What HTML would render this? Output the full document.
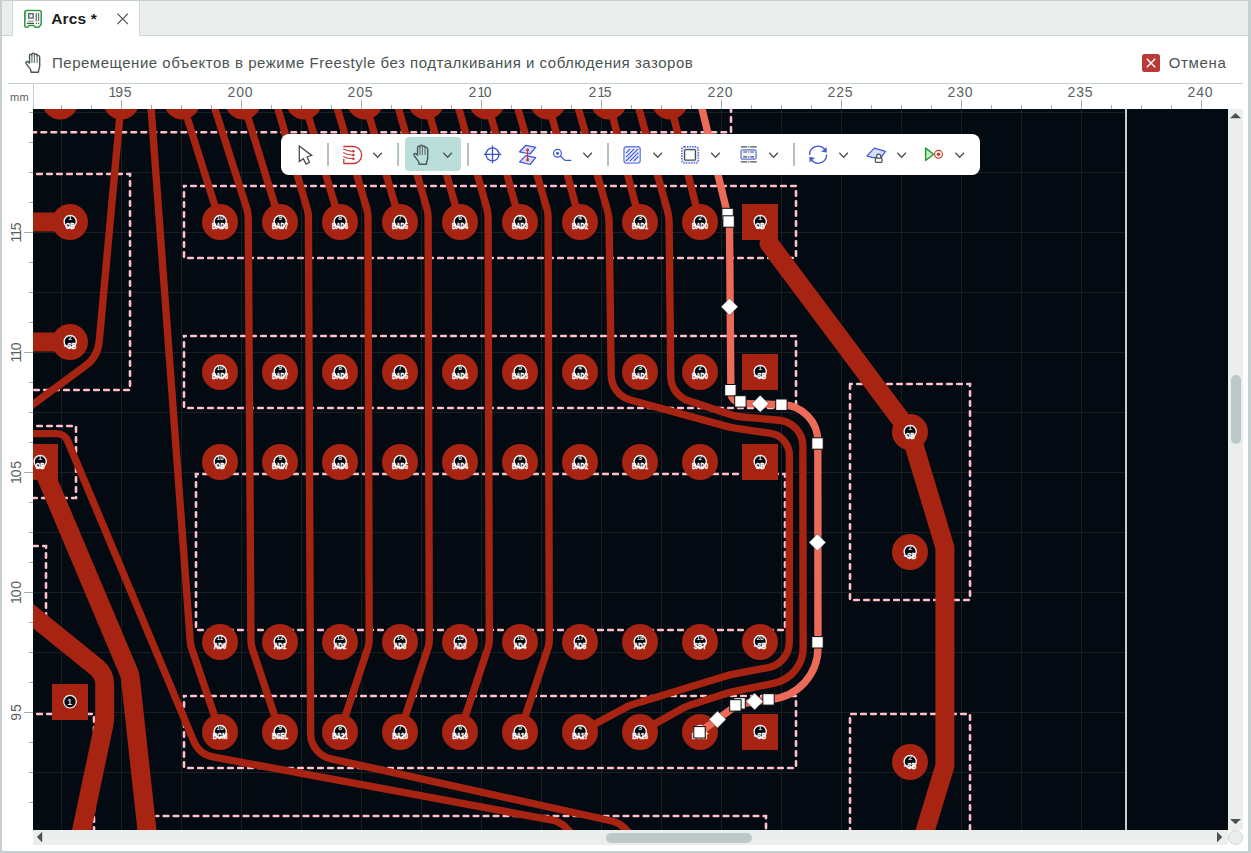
<!DOCTYPE html>
<html lang="ru">
<head>
<meta charset="utf-8">
<title>Arcs</title>
<style>
html,body{margin:0;padding:0;}
body{width:1251px;height:853px;position:relative;overflow:hidden;background:#fff;font-family:"Liberation Sans",sans-serif;color:#4b5352;}
.abs{position:absolute;}
#frameL{left:0;top:0;width:2px;height:853px;background:#c4d0d0;}
#frameT{left:0;top:0;width:1251px;height:1px;background:#c4d0d0;}
#frameR{left:1248px;top:0;width:3px;height:853px;background:#c4d0d0;}
#frameB{left:0;top:851px;width:1251px;height:2px;background:#c4d0d0;}
#tabbar{left:2px;top:1px;width:1246px;height:34px;background:#eceeed;border-bottom:1px solid #cbd5d4;}
#tab{left:12px;top:1px;width:126px;height:35px;background:#fff;border-left:1px solid #cfd8d7;border-right:1px solid #cfd8d7;}
#tabtitle{left:51.2px;top:10.4px;font-size:15.5px;font-weight:bold;color:#1c1c1c;line-height:18px;white-space:nowrap;letter-spacing:0.15px;}
#info{left:52px;top:53px;font-size:15px;line-height:20px;color:#4b5352;white-space:nowrap;letter-spacing:0.515px;}
#cancel{left:1168.7px;top:53px;font-size:15px;line-height:20px;color:#4b5352;white-space:nowrap;letter-spacing:0.65px;}
#cancelbox{left:1142px;top:54px;width:18px;height:18px;border-radius:2.5px;background:#b93a37;}
#rulerline{left:8px;top:83px;width:1235px;height:1px;background:#c3cfce;}
#rulervline{left:33px;top:84px;width:1px;height:25px;background:#c3cfce;}
#mm{left:10px;top:91px;font-size:11px;line-height:13px;color:#59615f;letter-spacing:0.4px;}
.rl{position:absolute;top:84.6px;font-size:14px;line-height:14px;color:#59615f;width:40px;text-align:center;letter-spacing:0.9px;}
.vl{position:absolute;left:-4px;font-size:14px;line-height:14px;color:#59615f;width:40px;height:14px;text-align:center;letter-spacing:0.9px;transform:rotate(-90deg);transform-origin:center center;}
.o{letter-spacing:-1.1px;}
#vscroll{left:1228px;top:109px;width:15px;height:721px;background:#eceeed;}
#hscroll{left:33px;top:830px;width:1195px;height:15px;background:#eceeed;}
#vthumb{left:1231px;top:375px;width:10px;height:69px;border-radius:5px;background:#bdc9c8;}
#hthumb{left:606px;top:833px;width:146px;height:10px;border-radius:5px;background:#bdc9c8;}
#corner{left:1228px;top:829.8px;width:13px;height:13px;border-radius:50%;background:#eceeed;border:1px solid #c9d8d6;box-sizing:content-box;}
#toolbar{left:281px;top:133.9px;width:698.8px;height:41.2px;border-radius:8px;background:#fff;}
#handbtn{left:404.6px;top:137.4px;width:56.7px;height:33.8px;border-radius:4px;background:#badfda;}
</style>
</head>
<body>
<div class="abs" id="tabbar"></div>
<div class="abs" id="tab"></div>
<div class="abs" id="frameT"></div>
<div class="abs" id="frameL"></div>
<div class="abs" id="frameR"></div>
<div class="abs" id="frameB"></div>

<!-- tab icon -->
<svg class="abs" style="left:0;top:0" width="60" height="36" viewBox="0 0 60 36">
 <path d="M26.8 10.6H39.2Q41.2 10.6 41.2 12.6V24.5L38.7 27.2H35.2L33.7 25.6H29L27.5 27.2H26.5Q24.8 27.2 24.8 25.3V12.6Q24.8 10.6 26.8 10.6Z" fill="#fff" stroke="#309a3b" stroke-width="1.5" stroke-linejoin="round"/>
 <path d="M25 13.5H26.3M25 15.9H26.3M25 18.3H26.3" stroke="#309a3b" stroke-width="1.1"/>
 <rect x="28.7" y="13.7" width="4.5" height="4.4" fill="#e9eded" stroke="#4b5352" stroke-width="1.2"/>
 <path d="M36.3 13.1V21.3" stroke="#707978" stroke-width="1.5"/>
 <path d="M38.7 13.1V21.3" stroke="#4b5352" stroke-width="1"/>
 <path d="M28.2 21.1H33.8" stroke="#8d9694" stroke-width="1.2"/>
 <path d="M26.9 23.4H34M35.7 23.4H36.8M38.2 23.4H39.2" stroke="#4b5352" stroke-width="1.2"/>
</svg>
<div class="abs" id="tabtitle">Arcs *</div>
<svg class="abs" style="left:116px;top:11.7px" width="14" height="14" viewBox="0 0 14 14"><path d="M1.4 1.6L12 12.2M12 1.6L1.4 12.2" stroke="#4b5352" stroke-width="1.2" fill="none"/></svg>

<!-- info bar -->
<svg class="abs" style="left:0;top:40px" width="60" height="44" viewBox="0 40 60 44"><g fill="none" stroke="#4b5658" stroke-linecap="round" stroke-linejoin="round"><path d="M29.55 63.1V55.6C29.55 54.6 30.3 54.3 30.9 54.3C31.5 54.3 31.9 54.6 31.9 55.2V54.6C31.9 53.6 32.5 53.1 33.3 53.1C34.1 53.1 34.5 53.6 34.5 54.6V54.9C34.5 54.3 35.2 54 35.8 54C36.5 54 37.1 54.4 37.1 55.2V55.7C37.2 55.2 37.8 55.2 38.4 55.4C39.2 55.7 39.7 56.2 39.7 57.2V66C39.7 67.6 39 68.8 38.6 69.8V71.4Q38.6 72.2 37.8 72.2H31.6Q30.8 72.2 30.8 71.4V69.9L26.2 63.7C25.6 62.9 25.7 62.1 26.3 61.6C26.9 61.2 27.6 61.4 28.1 61.9L29.55 63.1" stroke-width="1.4"/><path d="M31.9 55.4V62.4M34.4 54.8V62.4M37.1 55.6V62.4" stroke="#6f7a7b" stroke-width="1.25"/></g></svg>
<div class="abs" id="info">Перемещение объектов в режиме Freestyle без подталкивания и соблюдения зазоров</div>
<div class="abs" id="cancelbox"></div>
<svg class="abs" style="left:1142px;top:54px" width="18" height="18" viewBox="0 0 18 18"><path d="M4.8 4.8L13.2 13.2M13.2 4.8L4.8 13.2" stroke="#fff" stroke-width="1.4" fill="none"/></svg>
<div class="abs" id="cancel">Отмена</div>

<!-- rulers -->
<div class="abs" id="rulerline"></div>
<div class="abs" id="rulervline"></div>
<div class="abs" id="mm">mm</div>
<svg class="abs" style="left:0;top:0" width="1251" height="853" viewBox="0 0 1251 853"><g fill="#9fb1af" shape-rendering="crispEdges"><rect x="61.0" y="105" width="1" height="4"/><rect x="91.0" y="105" width="1" height="4"/><rect x="121.0" y="100" width="1" height="9"/><rect x="151.0" y="105" width="1" height="4"/><rect x="181.0" y="105" width="1" height="4"/><rect x="211.0" y="105" width="1" height="4"/><rect x="241.0" y="100" width="1" height="9"/><rect x="271.0" y="105" width="1" height="4"/><rect x="301.0" y="105" width="1" height="4"/><rect x="331.0" y="105" width="1" height="4"/><rect x="361.0" y="100" width="1" height="9"/><rect x="391.0" y="105" width="1" height="4"/><rect x="421.0" y="105" width="1" height="4"/><rect x="451.0" y="105" width="1" height="4"/><rect x="481.0" y="100" width="1" height="9"/><rect x="511.0" y="105" width="1" height="4"/><rect x="541.0" y="105" width="1" height="4"/><rect x="571.0" y="105" width="1" height="4"/><rect x="601.0" y="100" width="1" height="9"/><rect x="631.0" y="105" width="1" height="4"/><rect x="661.0" y="105" width="1" height="4"/><rect x="691.0" y="105" width="1" height="4"/><rect x="721.0" y="100" width="1" height="9"/><rect x="751.0" y="105" width="1" height="4"/><rect x="781.0" y="105" width="1" height="4"/><rect x="811.0" y="105" width="1" height="4"/><rect x="841.0" y="100" width="1" height="9"/><rect x="871.0" y="105" width="1" height="4"/><rect x="901.0" y="105" width="1" height="4"/><rect x="931.0" y="105" width="1" height="4"/><rect x="961.0" y="100" width="1" height="9"/><rect x="991.0" y="105" width="1" height="4"/><rect x="1021.0" y="105" width="1" height="4"/><rect x="1051.0" y="105" width="1" height="4"/><rect x="1081.0" y="100" width="1" height="9"/><rect x="1111.0" y="105" width="1" height="4"/><rect x="1141.0" y="105" width="1" height="4"/><rect x="1171.0" y="105" width="1" height="4"/><rect x="1201.0" y="100" width="1" height="9"/><rect x="29" y="112.0" width="4" height="1"/><rect x="29" y="142.0" width="4" height="1"/><rect x="29" y="172.0" width="4" height="1"/><rect x="29" y="202.0" width="4" height="1"/><rect x="24" y="232.0" width="9" height="1"/><rect x="29" y="262.0" width="4" height="1"/><rect x="29" y="292.0" width="4" height="1"/><rect x="29" y="322.0" width="4" height="1"/><rect x="24" y="352.0" width="9" height="1"/><rect x="29" y="382.0" width="4" height="1"/><rect x="29" y="412.0" width="4" height="1"/><rect x="29" y="442.0" width="4" height="1"/><rect x="24" y="472.0" width="9" height="1"/><rect x="29" y="502.0" width="4" height="1"/><rect x="29" y="532.0" width="4" height="1"/><rect x="29" y="562.0" width="4" height="1"/><rect x="24" y="592.0" width="9" height="1"/><rect x="29" y="622.0" width="4" height="1"/><rect x="29" y="652.0" width="4" height="1"/><rect x="29" y="682.0" width="4" height="1"/><rect x="24" y="712.0" width="9" height="1"/><rect x="29" y="742.0" width="4" height="1"/><rect x="29" y="772.0" width="4" height="1"/><rect x="29" y="802.0" width="4" height="1"/></g></svg>
<div class="rl" style="left:100.5px"><span class=o>1</span>95</div>
<div class="rl" style="left:220.5px">200</div>
<div class="rl" style="left:340.5px">205</div>
<div class="rl" style="left:460.5px">2<span class=o>1</span>0</div>
<div class="rl" style="left:580.5px">2<span class=o>1</span>5</div>
<div class="rl" style="left:700.5px">220</div>
<div class="rl" style="left:820.5px">225</div>
<div class="rl" style="left:940.5px">230</div>
<div class="rl" style="left:1060.5px">235</div>
<div class="rl" style="left:1180.5px">240</div>
<div class="vl" style="top:224.5px"><span class=o>1</span><span class=o>1</span>5</div>
<div class="vl" style="top:344.5px"><span class=o>1</span><span class=o>1</span>0</div>
<div class="vl" style="top:464.5px"><span class=o>1</span>05</div>
<div class="vl" style="top:584.5px"><span class=o>1</span>00</div>
<div class="vl" style="top:704.5px">95</div>

<!-- canvas -->
<svg class="abs" style="left:33px;top:109px" width="1195" height="721" viewBox="33 109 1195 721">
<rect x="33" y="109" width="1195" height="721" fill="#030a11"/>
<g stroke="#171f21" stroke-width="1" fill="none" shape-rendering="crispEdges"><path d="M61.5 109V830"/><path d="M121.5 109V830"/><path d="M181.5 109V830"/><path d="M241.5 109V830"/><path d="M301.5 109V830"/><path d="M361.5 109V830"/><path d="M421.5 109V830"/><path d="M481.5 109V830"/><path d="M541.5 109V830"/><path d="M601.5 109V830"/><path d="M661.5 109V830"/><path d="M721.5 109V830"/><path d="M781.5 109V830"/><path d="M841.5 109V830"/><path d="M901.5 109V830"/><path d="M961.5 109V830"/><path d="M1021.5 109V830"/><path d="M1081.5 109V830"/><path d="M33 112.5H1126"/><path d="M33 172.5H1126"/><path d="M33 232.5H1126"/><path d="M33 292.5H1126"/><path d="M33 352.5H1126"/><path d="M33 412.5H1126"/><path d="M33 472.5H1126"/><path d="M33 532.5H1126"/><path d="M33 592.5H1126"/><path d="M33 652.5H1126"/><path d="M33 712.5H1126"/><path d="M33 772.5H1126"/></g><rect x="1125" y="109" width="2" height="721" fill="#c9cccc"/><g fill="none" stroke="#ffc0cb" stroke-width="2.6" stroke-dasharray="4.6 5.4" stroke-dashoffset="2.8" stroke-linecap="round"><path d="M731 90V132.3H20"/><path d="M20 174H130V390H20"/><path d="M184 186H796V258H184Z"/><path d="M184 336H796V408H184Z"/><path d="M196 474H785V630H196Z"/><path d="M184 696H796V768H184Z"/><path d="M20 426H76V498H20"/><path d="M16 546H46V621"/><path d="M20 714H94V860"/><path d="M156.5 816H766V860"/><path d="M850 384H970V600H850Z"/><path d="M850 860V714H970V860"/></g><g fill="none" stroke="#a72312" stroke-linecap="round" stroke-linejoin="round"><g stroke-width="19"><path d="M769 243.4L910 432"/><path d="M910.00 432.00L944.90 547.50L944.90 765.70L916.30 860.00"/><path d="M20 222H70"/><path d="M20 342H70"/><path d="M40.00 462.00L128.29 670.95A30.00 30.00 0 0 1 130.48 679.37L150.20 860.00"/><path d="M20.00 605.40L96.55 667.40A22.00 22.00 0 0 1 104.70 684.49L104.70 717.87A30.00 30.00 0 0 1 104.05 724.06L75.40 860.00"/></g><g stroke-width="7.4"><path d="M121.20 101.60L99.24 341.04A35.00 35.00 0 0 1 85.14 366.03L20.00 414.00"/><path d="M150.50 100.00L190.27 641.82A25.00 25.00 0 0 0 191.52 648.02L220.00 732.00"/><path d="M182.1 101.6L220 222"/><path d="M243.1 101.6L280 222"/><path d="M304.0 101.6L340 222"/><path d="M365.0 101.6L400 222"/><path d="M426.0 101.6L460 222"/><path d="M486.9 101.6L520 222"/><path d="M547.9 101.6L580 222"/><path d="M608.8 101.6L640 222"/><path d="M669.8 101.6L700 222"/><path d="M211.49 98.00L246.81 208.64A30.00 30.00 0 0 1 248.23 217.57L250.97 641.03A25.00 25.00 0 0 0 252.26 648.77L280.00 732.00"/><path d="M274.78 98.00L307.21 208.94A30.00 30.00 0 0 1 308.42 217.23L310.61 733.52A26.00 26.00 0 0 0 330.99 758.79L611.81 821.01A25.00 25.00 0 0 1 624.18 827.83L656.00 860.00"/><path d="M334.27 98.00L366.80 208.91A30.00 30.00 0 0 1 368.01 217.27L369.19 639.92A25.00 25.00 0 0 1 367.92 647.87L340.00 732.00"/><path d="M395.59 98.00L426.98 209.04A30.00 30.00 0 0 1 428.11 217.12L429.29 639.91A25.00 25.00 0 0 1 428.01 647.88L400.00 732.00"/><path d="M455.92 98.00L487.00 209.08A30.00 30.00 0 0 1 488.11 217.08L489.29 639.91A25.00 25.00 0 0 1 488.01 647.88L460.00 732.00"/><path d="M514.82 98.00L546.93 208.95A30.00 30.00 0 0 1 548.11 217.21L549.29 639.91A25.00 25.00 0 0 1 548.01 647.88L520.00 732.00"/><path d="M575.36 98.00L607.36 210.26A45.00 45.00 0 0 1 609.08 221.97L611.23 375.25A26.00 26.00 0 0 0 630.36 399.96L728.70 426.87A40.00 40.00 0 0 0 733.36 427.85L770.63 433.40A22.00 22.00 0 0 1 789.39 455.17L789.31 642.00A26.00 26.00 0 0 1 768.18 667.53L732.18 674.39A60.00 60.00 0 0 0 725.91 675.94L632.53 704.44A30.00 30.00 0 0 0 627.09 706.70L580.00 732.00"/><path d="M635.92 98.00L667.40 210.29A45.00 45.00 0 0 1 669.07 221.93L670.79 376.44A26.00 26.00 0 0 0 688.63 400.83L731.00 414.85A40.00 40.00 0 0 0 740.01 416.71L779.14 420.19A26.00 26.00 0 0 1 802.84 446.05L803.15 647.73A36.00 36.00 0 0 1 774.56 683.02L732.08 691.95A60.00 60.00 0 0 0 726.01 693.56L688.98 705.50A30.00 30.00 0 0 0 683.65 707.82L640.00 732.00"/><path d="M20.00 433.60L56.62 433.60A12.00 12.00 0 0 1 67.69 440.95L193.83 741.38A26.00 26.00 0 0 0 213.02 756.87L552.16 820.23A25.00 25.00 0 0 1 565.54 827.44L597.00 860.00"/></g></g><g fill="#a72312"><circle cx="60.2" cy="101.6" r="18"/><circle cx="121.2" cy="101.6" r="18"/><circle cx="182.1" cy="101.6" r="18"/><circle cx="243.1" cy="101.6" r="18"/><circle cx="304.0" cy="101.6" r="18"/><circle cx="365.0" cy="101.6" r="18"/><circle cx="426.0" cy="101.6" r="18"/><circle cx="486.9" cy="101.6" r="18"/><circle cx="547.9" cy="101.6" r="18"/><circle cx="608.8" cy="101.6" r="18"/><circle cx="669.8" cy="101.6" r="18"/><circle cx="220" cy="222" r="18"/><circle cx="280" cy="222" r="18"/><circle cx="340" cy="222" r="18"/><circle cx="400" cy="222" r="18"/><circle cx="460" cy="222" r="18"/><circle cx="520" cy="222" r="18"/><circle cx="580" cy="222" r="18"/><circle cx="640" cy="222" r="18"/><circle cx="700" cy="222" r="18"/><rect x="742" y="204" width="36" height="36"/><circle cx="220" cy="372" r="18"/><circle cx="280" cy="372" r="18"/><circle cx="340" cy="372" r="18"/><circle cx="400" cy="372" r="18"/><circle cx="460" cy="372" r="18"/><circle cx="520" cy="372" r="18"/><circle cx="580" cy="372" r="18"/><circle cx="640" cy="372" r="18"/><circle cx="700" cy="372" r="18"/><rect x="742" y="354" width="36" height="36"/><circle cx="220" cy="462" r="18"/><circle cx="280" cy="462" r="18"/><circle cx="340" cy="462" r="18"/><circle cx="400" cy="462" r="18"/><circle cx="460" cy="462" r="18"/><circle cx="520" cy="462" r="18"/><circle cx="580" cy="462" r="18"/><circle cx="640" cy="462" r="18"/><circle cx="700" cy="462" r="18"/><rect x="742" y="444" width="36" height="36"/><circle cx="220" cy="642" r="18"/><circle cx="280" cy="642" r="18"/><circle cx="340" cy="642" r="18"/><circle cx="400" cy="642" r="18"/><circle cx="460" cy="642" r="18"/><circle cx="520" cy="642" r="18"/><circle cx="580" cy="642" r="18"/><circle cx="640" cy="642" r="18"/><circle cx="700" cy="642" r="18"/><circle cx="760" cy="642" r="18"/><circle cx="220" cy="732" r="18"/><circle cx="280" cy="732" r="18"/><circle cx="340" cy="732" r="18"/><circle cx="400" cy="732" r="18"/><circle cx="460" cy="732" r="18"/><circle cx="520" cy="732" r="18"/><circle cx="580" cy="732" r="18"/><circle cx="640" cy="732" r="18"/><circle cx="700" cy="732" r="18"/><rect x="742" y="714" width="36" height="36"/><circle cx="70" cy="222" r="18"/><circle cx="70" cy="342" r="18"/><rect x="22" y="444" width="36" height="36"/><rect x="52" y="684" width="36" height="36"/><circle cx="910" cy="432" r="18"/><circle cx="910" cy="552" r="18"/><circle cx="910" cy="762" r="18"/></g><g fill="#fff" stroke="#fff" stroke-width="0.2" stroke-linejoin="round" font-family="&quot;Liberation Sans&quot;, sans-serif" font-size="7.6"><circle cx="220.2" cy="221.5" r="6.1" fill="#05090d" stroke="#fff" stroke-width="1.3"/><text transform="translate(216.82 219.90) scale(0.8 1)">10</text><circle cx="220.2" cy="371.5" r="6.1" fill="#05090d" stroke="#fff" stroke-width="1.3"/><text transform="translate(216.82 369.90) scale(0.8 1)">10</text><circle cx="220.2" cy="461.5" r="6.1" fill="#05090d" stroke="#fff" stroke-width="1.3"/><text transform="translate(216.82 459.90) scale(0.8 1)">10</text><circle cx="280.2" cy="221.5" r="6.1" fill="#05090d" stroke="#fff" stroke-width="1.3"/><text transform="translate(278.51 219.90) scale(0.8 1)">9</text><circle cx="280.2" cy="371.5" r="6.1" fill="#05090d" stroke="#fff" stroke-width="1.3"/><text transform="translate(278.51 369.90) scale(0.8 1)">9</text><circle cx="280.2" cy="461.5" r="6.1" fill="#05090d" stroke="#fff" stroke-width="1.3"/><text transform="translate(278.51 459.90) scale(0.8 1)">9</text><circle cx="340.2" cy="221.5" r="6.1" fill="#05090d" stroke="#fff" stroke-width="1.3"/><text transform="translate(338.51 219.90) scale(0.8 1)">8</text><circle cx="340.2" cy="371.5" r="6.1" fill="#05090d" stroke="#fff" stroke-width="1.3"/><text transform="translate(338.51 369.90) scale(0.8 1)">8</text><circle cx="340.2" cy="461.5" r="6.1" fill="#05090d" stroke="#fff" stroke-width="1.3"/><text transform="translate(338.51 459.90) scale(0.8 1)">8</text><circle cx="400.2" cy="221.5" r="6.1" fill="#05090d" stroke="#fff" stroke-width="1.3"/><text transform="translate(398.51 219.90) scale(0.8 1)">7</text><circle cx="400.2" cy="371.5" r="6.1" fill="#05090d" stroke="#fff" stroke-width="1.3"/><text transform="translate(398.51 369.90) scale(0.8 1)">7</text><circle cx="400.2" cy="461.5" r="6.1" fill="#05090d" stroke="#fff" stroke-width="1.3"/><text transform="translate(398.51 459.90) scale(0.8 1)">7</text><circle cx="460.2" cy="221.5" r="6.1" fill="#05090d" stroke="#fff" stroke-width="1.3"/><text transform="translate(458.51 219.90) scale(0.8 1)">6</text><circle cx="460.2" cy="371.5" r="6.1" fill="#05090d" stroke="#fff" stroke-width="1.3"/><text transform="translate(458.51 369.90) scale(0.8 1)">6</text><circle cx="460.2" cy="461.5" r="6.1" fill="#05090d" stroke="#fff" stroke-width="1.3"/><text transform="translate(458.51 459.90) scale(0.8 1)">6</text><circle cx="520.2" cy="221.5" r="6.1" fill="#05090d" stroke="#fff" stroke-width="1.3"/><text transform="translate(518.51 219.90) scale(0.8 1)">5</text><circle cx="520.2" cy="371.5" r="6.1" fill="#05090d" stroke="#fff" stroke-width="1.3"/><text transform="translate(518.51 369.90) scale(0.8 1)">5</text><circle cx="520.2" cy="461.5" r="6.1" fill="#05090d" stroke="#fff" stroke-width="1.3"/><text transform="translate(518.51 459.90) scale(0.8 1)">5</text><circle cx="580.2" cy="221.5" r="6.1" fill="#05090d" stroke="#fff" stroke-width="1.3"/><text transform="translate(578.51 219.90) scale(0.8 1)">4</text><circle cx="580.2" cy="371.5" r="6.1" fill="#05090d" stroke="#fff" stroke-width="1.3"/><text transform="translate(578.51 369.90) scale(0.8 1)">4</text><circle cx="580.2" cy="461.5" r="6.1" fill="#05090d" stroke="#fff" stroke-width="1.3"/><text transform="translate(578.51 459.90) scale(0.8 1)">4</text><circle cx="640.2" cy="221.5" r="6.1" fill="#05090d" stroke="#fff" stroke-width="1.3"/><text transform="translate(638.51 219.90) scale(0.8 1)">3</text><circle cx="640.2" cy="371.5" r="6.1" fill="#05090d" stroke="#fff" stroke-width="1.3"/><text transform="translate(638.51 369.90) scale(0.8 1)">3</text><circle cx="640.2" cy="461.5" r="6.1" fill="#05090d" stroke="#fff" stroke-width="1.3"/><text transform="translate(638.51 459.90) scale(0.8 1)">3</text><circle cx="700.2" cy="221.5" r="6.1" fill="#05090d" stroke="#fff" stroke-width="1.3"/><text transform="translate(698.51 219.90) scale(0.8 1)">2</text><circle cx="700.2" cy="371.5" r="6.1" fill="#05090d" stroke="#fff" stroke-width="1.3"/><text transform="translate(698.51 369.90) scale(0.8 1)">2</text><circle cx="700.2" cy="461.5" r="6.1" fill="#05090d" stroke="#fff" stroke-width="1.3"/><text transform="translate(698.51 459.90) scale(0.8 1)">2</text><circle cx="760.2" cy="221.5" r="6.1" fill="#05090d" stroke="#fff" stroke-width="1.3"/><text transform="translate(758.51 219.90) scale(0.8 1)">1</text><circle cx="760.2" cy="371.5" r="6.1" fill="#05090d" stroke="#fff" stroke-width="1.3"/><text transform="translate(758.51 369.90) scale(0.8 1)">1</text><circle cx="760.2" cy="461.5" r="6.1" fill="#05090d" stroke="#fff" stroke-width="1.3"/><text transform="translate(758.51 459.90) scale(0.8 1)">1</text><circle cx="220.2" cy="641.5" r="6.1" fill="#05090d" stroke="#fff" stroke-width="1.3"/><text transform="translate(216.82 639.90) scale(0.8 1)">11</text><circle cx="280.2" cy="641.5" r="6.1" fill="#05090d" stroke="#fff" stroke-width="1.3"/><text transform="translate(276.82 639.90) scale(0.8 1)">12</text><circle cx="340.2" cy="641.5" r="6.1" fill="#05090d" stroke="#fff" stroke-width="1.3"/><text transform="translate(336.82 639.90) scale(0.8 1)">13</text><circle cx="400.2" cy="641.5" r="6.1" fill="#05090d" stroke="#fff" stroke-width="1.3"/><text transform="translate(396.82 639.90) scale(0.8 1)">14</text><circle cx="460.2" cy="641.5" r="6.1" fill="#05090d" stroke="#fff" stroke-width="1.3"/><text transform="translate(456.82 639.90) scale(0.8 1)">15</text><circle cx="520.2" cy="641.5" r="6.1" fill="#05090d" stroke="#fff" stroke-width="1.3"/><text transform="translate(516.82 639.90) scale(0.8 1)">16</text><circle cx="580.2" cy="641.5" r="6.1" fill="#05090d" stroke="#fff" stroke-width="1.3"/><text transform="translate(576.82 639.90) scale(0.8 1)">17</text><circle cx="640.2" cy="641.5" r="6.1" fill="#05090d" stroke="#fff" stroke-width="1.3"/><text transform="translate(636.82 639.90) scale(0.8 1)">18</text><circle cx="700.2" cy="641.5" r="6.1" fill="#05090d" stroke="#fff" stroke-width="1.3"/><text transform="translate(696.82 639.90) scale(0.8 1)">19</text><circle cx="760.2" cy="641.5" r="6.1" fill="#05090d" stroke="#fff" stroke-width="1.3"/><text transform="translate(756.82 639.90) scale(0.8 1)">20</text><circle cx="220.2" cy="731.5" r="6.1" fill="#05090d" stroke="#fff" stroke-width="1.3"/><text transform="translate(216.82 729.90) scale(0.8 1)">10</text><circle cx="280.2" cy="731.5" r="6.1" fill="#05090d" stroke="#fff" stroke-width="1.3"/><text transform="translate(278.51 729.90) scale(0.8 1)">9</text><circle cx="340.2" cy="731.5" r="6.1" fill="#05090d" stroke="#fff" stroke-width="1.3"/><text transform="translate(338.51 729.90) scale(0.8 1)">8</text><circle cx="400.2" cy="731.5" r="6.1" fill="#05090d" stroke="#fff" stroke-width="1.3"/><text transform="translate(398.51 729.90) scale(0.8 1)">7</text><circle cx="460.2" cy="731.5" r="6.1" fill="#05090d" stroke="#fff" stroke-width="1.3"/><text transform="translate(458.51 729.90) scale(0.8 1)">6</text><circle cx="520.2" cy="731.5" r="6.1" fill="#05090d" stroke="#fff" stroke-width="1.3"/><text transform="translate(518.51 729.90) scale(0.8 1)">5</text><circle cx="580.2" cy="731.5" r="6.1" fill="#05090d" stroke="#fff" stroke-width="1.3"/><text transform="translate(578.51 729.90) scale(0.8 1)">4</text><circle cx="640.2" cy="731.5" r="6.1" fill="#05090d" stroke="#fff" stroke-width="1.3"/><text transform="translate(638.51 729.90) scale(0.8 1)">3</text><circle cx="700.2" cy="731.5" r="6.1" fill="#05090d" stroke="#fff" stroke-width="1.3"/><text transform="translate(698.51 729.90) scale(0.8 1)">2</text><circle cx="760.2" cy="731.5" r="6.1" fill="#05090d" stroke="#fff" stroke-width="1.3"/><text transform="translate(758.51 729.90) scale(0.8 1)">1</text><circle cx="70.2" cy="221.5" r="6.1" fill="#05090d" stroke="#fff" stroke-width="1.3"/><text transform="translate(68.51 219.90) scale(0.8 1)">1</text><circle cx="70.2" cy="341.5" r="6.1" fill="#05090d" stroke="#fff" stroke-width="1.3"/><text transform="translate(68.51 339.90) scale(0.8 1)">2</text><circle cx="40.2" cy="461.5" r="6.1" fill="#05090d" stroke="#fff" stroke-width="1.3"/><text transform="translate(38.51 459.90) scale(0.8 1)">1</text><circle cx="910.2" cy="431.5" r="6.1" fill="#05090d" stroke="#fff" stroke-width="1.3"/><text transform="translate(908.51 429.90) scale(0.8 1)">1</text><circle cx="910.2" cy="551.5" r="6.1" fill="#05090d" stroke="#fff" stroke-width="1.3"/><text transform="translate(908.51 549.90) scale(0.8 1)">2</text><circle cx="910.2" cy="761.5" r="6.1" fill="#05090d" stroke="#fff" stroke-width="1.3"/><text transform="translate(908.51 759.90) scale(0.8 1)">2</text><g stroke-width="0.32" font-weight="bold" font-size="8.19"><text transform="translate(212.10 229.10) scale(0.7175 1)">BAD8</text><text transform="translate(212.10 379.10) scale(0.7175 1)">BAD8</text><text transform="translate(215.43 469.10) scale(0.76 1)">OB</text><text transform="translate(272.10 229.10) scale(0.7175 1)">BAD7</text><text transform="translate(272.10 379.10) scale(0.7175 1)">BAD7</text><text transform="translate(272.10 469.10) scale(0.7175 1)">BAD7</text><text transform="translate(332.10 229.10) scale(0.7175 1)">BAD6</text><text transform="translate(332.10 379.10) scale(0.7175 1)">BAD6</text><text transform="translate(332.10 469.10) scale(0.7175 1)">BAD6</text><text transform="translate(392.10 229.10) scale(0.7175 1)">BAD5</text><text transform="translate(392.10 379.10) scale(0.7175 1)">BAD5</text><text transform="translate(392.10 469.10) scale(0.7175 1)">BAD5</text><text transform="translate(452.10 229.10) scale(0.7175 1)">BAD4</text><text transform="translate(452.10 379.10) scale(0.7175 1)">BAD4</text><text transform="translate(452.10 469.10) scale(0.7175 1)">BAD4</text><text transform="translate(512.10 229.10) scale(0.7175 1)">BAD3</text><text transform="translate(512.10 379.10) scale(0.7175 1)">BAD3</text><text transform="translate(512.10 469.10) scale(0.7175 1)">BAD3</text><text transform="translate(572.10 229.10) scale(0.7175 1)">BAD2</text><text transform="translate(572.10 379.10) scale(0.7175 1)">BAD2</text><text transform="translate(572.10 469.10) scale(0.7175 1)">BAD2</text><text transform="translate(632.10 229.10) scale(0.7175 1)">BAD1</text><text transform="translate(632.10 379.10) scale(0.7175 1)">BAD1</text><text transform="translate(632.10 469.10) scale(0.7175 1)">BAD1</text><text transform="translate(692.10 229.10) scale(0.7175 1)">BAD0</text><text transform="translate(692.10 379.10) scale(0.7175 1)">BAD0</text><text transform="translate(692.10 469.10) scale(0.7175 1)">BAD0</text><text transform="translate(755.43 229.10) scale(0.76 1)">OB</text><text transform="translate(753.95 379.10) scale(0.76 1)">~SB</text><text transform="translate(755.43 469.10) scale(0.76 1)">OB</text><text transform="translate(213.87 649.10) scale(0.76 1)">AD0</text><text transform="translate(273.87 649.10) scale(0.76 1)">AD1</text><text transform="translate(333.87 649.10) scale(0.76 1)">AD2</text><text transform="translate(393.87 649.10) scale(0.76 1)">AD3</text><text transform="translate(453.87 649.10) scale(0.76 1)">AD3</text><text transform="translate(513.87 649.10) scale(0.76 1)">AD4</text><text transform="translate(573.87 649.10) scale(0.76 1)">AD5</text><text transform="translate(633.87 649.10) scale(0.76 1)">AD7</text><text transform="translate(693.87 649.10) scale(0.76 1)">SBT</text><text transform="translate(753.95 649.10) scale(0.76 1)">~SB</text><text transform="translate(212.83 739.10) scale(0.76 1)">BGM</text><text transform="translate(272.10 739.10) scale(0.7325 1)">BSEL</text><text transform="translate(332.13 739.10) scale(0.76 1)">BA21</text><text transform="translate(392.13 739.10) scale(0.76 1)">BA20</text><text transform="translate(452.13 739.10) scale(0.76 1)">BA19</text><text transform="translate(512.13 739.10) scale(0.76 1)">BA18</text><text transform="translate(572.13 739.10) scale(0.76 1)">BA17</text><text transform="translate(632.13 739.10) scale(0.76 1)">BA16</text><text transform="translate(692.10 739.10) scale(0.7025 1)">BCNT</text><text transform="translate(753.95 739.10) scale(0.76 1)">~SB</text><text transform="translate(65.43 229.10) scale(0.76 1)">OB</text><text transform="translate(63.95 349.10) scale(0.76 1)">~SB</text><text transform="translate(35.43 469.10) scale(0.76 1)">OB</text><text transform="translate(905.43 439.10) scale(0.76 1)">OB</text><text transform="translate(903.95 559.10) scale(0.76 1)">~SB</text><text transform="translate(903.95 769.10) scale(0.76 1)">~SB</text></g><circle cx="70" cy="701.7" r="6.3" fill="#05090d" stroke-width="1.15"/><g stroke-width="0.13"><text x="67.35" y="704.90" font-size="8.8">1</text></g></g><g fill="none" stroke="#ed6a58" stroke-width="7.4" stroke-linecap="round" stroke-linejoin="round"><path d="M699.40 98.00L727.41 213.61A20.00 20.00 0 0 1 727.58 214.39L729.50 224.00L730.91 392.45A11.00 11.00 0 0 0 741.54 403.36L781.40 404.70L783.22 404.79A36.40 36.40 0 0 1 817.82 441.12L817.97 647.83A51.54 51.54 0 0 1 771.45 699.16L769.00 699.40L739.97 704.12A10.00 10.00 0 0 0 735.67 705.91L700.00 732.00"/></g><g fill="#fff" stroke="#0c0c0c" stroke-width="1"><rect x="721.9" y="208.3" width="11.4" height="11.4"/><rect x="722.9" y="215.8" width="11.4" height="11.4"/><rect x="723.5" y="300.8" width="12" height="12" stroke-width="0.4" transform="rotate(45 729.5 306.8)"/><rect x="724.6999999999999" y="384.5" width="11.4" height="11.4"/><rect x="734.6999999999999" y="395.7" width="11.4" height="11.4"/><rect x="754.2" y="397.8" width="12" height="12" stroke-width="0.4" transform="rotate(45 760.2 403.8)"/><rect x="775.6999999999999" y="399.0" width="11.4" height="11.4"/><rect x="811.8" y="437.8" width="11.4" height="11.4"/><rect x="811.4" y="536.4" width="12" height="12" stroke-width="0.4" transform="rotate(45 817.4 542.4)"/><rect x="811.8" y="636.5999999999999" width="11.4" height="11.4"/><rect x="762.8" y="693.6999999999999" width="11.4" height="11.4"/><rect x="748.6" y="695.5" width="12" height="12" stroke-width="0.4" transform="rotate(45 754.6 701.5)"/><rect x="733.9" y="697.6999999999999" width="11.4" height="11.4"/><rect x="729.6999999999999" y="699.6999999999999" width="11.4" height="11.4"/><rect x="711.5" y="713.5" width="12" height="12" stroke-width="0.4" transform="rotate(45 717.5 719.5)"/><rect x="693.8" y="726.5999999999999" width="11.4" height="11.4"/></g>
</svg>

<!-- scrollbars -->
<div class="abs" id="vscroll"></div>
<div class="abs" id="hscroll"></div>
<div class="abs" id="vthumb"></div>
<div class="abs" id="hthumb"></div>
<div class="abs" id="corner"></div>
<svg class="abs" style="left:1228px;top:109px" width="15" height="721" viewBox="0 0 15 721"><path d="M2 9.2L7.5 4L13 9.2Z M2 710L7.5 715.2L13 710Z" fill="#4b5352"/></svg>
<svg class="abs" style="left:33px;top:830px" width="1195" height="15" viewBox="0 0 1195 15"><path d="M9.2 1.8L4 7.1L9.2 12.4Z M1184 1.8L1189.2 7.1L1184 12.4Z" fill="#4b5352"/></svg>

<!-- toolbar -->
<div class="abs" id="toolbar"></div>
<div class="abs" id="handbtn"></div>
<svg class="abs" style="left:281px;top:134px" width="699" height="41" viewBox="281 134 699 41"><path d="M373.3 152.8L377.6 157.2L381.90000000000003 152.8" fill="none" stroke="#4b5352" stroke-width="1.35"/><path d="M443.3 152.8L447.6 157.2L451.90000000000003 152.8" fill="none" stroke="#4b5352" stroke-width="1.35"/><path d="M583.3000000000001 152.8L587.6 157.2L591.9 152.8" fill="none" stroke="#4b5352" stroke-width="1.35"/><path d="M653.4000000000001 152.8L657.7 157.2L662.0 152.8" fill="none" stroke="#4b5352" stroke-width="1.35"/><path d="M711.2 152.8L715.5 157.2L719.8 152.8" fill="none" stroke="#4b5352" stroke-width="1.35"/><path d="M769.2 152.8L773.5 157.2L777.8 152.8" fill="none" stroke="#4b5352" stroke-width="1.35"/><path d="M839.3000000000001 152.8L843.6 157.2L847.9 152.8" fill="none" stroke="#4b5352" stroke-width="1.35"/><path d="M897.3000000000001 152.8L901.6 157.2L905.9 152.8" fill="none" stroke="#4b5352" stroke-width="1.35"/><path d="M955.4000000000001 152.8L959.7 157.2L964.0 152.8" fill="none" stroke="#4b5352" stroke-width="1.35"/><rect x="327" y="143" width="2" height="22.8" fill="#b2c1bf"/><rect x="397.1" y="143" width="2" height="22.8" fill="#b2c1bf"/><rect x="467" y="143" width="2" height="22.8" fill="#b2c1bf"/><rect x="607" y="143" width="2" height="22.8" fill="#b2c1bf"/><rect x="793" y="143" width="2" height="22.8" fill="#b2c1bf"/><g fill="none" stroke-linecap="round" stroke-linejoin="round">
<!-- cursor -->
<path d="M299.3 146V161.5L303.3 158.7L306.1 164.1L309.5 162.3L307 157L311.7 155.4Z" fill="#fff" stroke="#3f4a49" stroke-width="1.25" stroke-linejoin="miter"/>
<!-- route (red D) -->
<g stroke="#c23b38" stroke-width="1.3">
<path d="M343.8 146.5H353.2A8.5 8.5 0 0 1 353.2 163.5H343.8V159.4"/>
<path d="M343.4 148.9C345.4 148.9 345.8 150.3 347.2 150.4S349.4 151.2 352.4 151.2" stroke-width="1.05"/>
<path d="M343.4 152.8C345.4 152.8 345.8 154.2 347.2 154.3S349.4 155 352.4 155" stroke-width="1.05"/>
<path d="M343.4 156.7C345.4 156.7 345.8 158 347.2 158.1S349.4 158.8 352.4 158.8" stroke-width="1.05"/>
</g>
<g fill="#c23b38" stroke="none"><circle cx="353.4" cy="151.2" r="1.3"/><circle cx="353.4" cy="155" r="1.3"/><circle cx="353.4" cy="158.8" r="1.3"/></g>
<!-- hand -->
<g transform="translate(388 92)"><g fill="none" stroke="#4b5658" stroke-linecap="round" stroke-linejoin="round"><path d="M29.55 63.1V55.6C29.55 54.6 30.3 54.3 30.9 54.3C31.5 54.3 31.9 54.6 31.9 55.2V54.6C31.9 53.6 32.5 53.1 33.3 53.1C34.1 53.1 34.5 53.6 34.5 54.6V54.9C34.5 54.3 35.2 54 35.8 54C36.5 54 37.1 54.4 37.1 55.2V55.7C37.2 55.2 37.8 55.2 38.4 55.4C39.2 55.7 39.7 56.2 39.7 57.2V66C39.7 67.6 39 68.8 38.6 69.8V71.4Q38.6 72.2 37.8 72.2H31.6Q30.8 72.2 30.8 71.4V69.9L26.2 63.7C25.6 62.9 25.7 62.1 26.3 61.6C26.9 61.2 27.6 61.4 28.1 61.9L29.55 63.1" stroke-width="1.4"/><path d="M31.9 55.4V62.4M34.4 54.8V62.4M37.1 55.6V62.4" stroke="#6f7a7b" stroke-width="1.25"/></g></g>
<!-- crosshair -->
<g stroke="#3f55cf" stroke-width="1.35"><circle cx="492.5" cy="154.4" r="6.5"/><path d="M483.7 154.4H501.4M492.5 145.4V163.3" stroke-linecap="butt"/></g>
<!-- layers -->
<g stroke="#3f57d6" stroke-width="1.25" fill="#d8defa">
<path d="M519.6 151.8L525.8 145.3L535.7 147.4L530 154Z"/>
<path d="M519.6 161.9L525.8 155.6L535.7 157.6L530 164.5Z"/>
</g>
<path d="M527.6 150V159.9" stroke="#c23b38" stroke-width="1.2"/>
<g fill="#c23b38" stroke="none"><circle cx="527.6" cy="149.9" r="1.45"/><circle cx="527.6" cy="160" r="1.45"/></g>
<!-- via -->
<g stroke="#3f57d6" stroke-width="1.2"><circle cx="557.5" cy="153.2" r="3.9"/><path d="M560.6 156.2L565 160.4H570.8"/></g>
<circle cx="557.5" cy="153.2" r="1.5" fill="#3f57d6" stroke="none"/>
<!-- hatch -->
<rect x="624" y="146.7" width="16.2" height="16.4" rx="2.6" fill="#eef1fd" stroke="#6b80dc" stroke-width="1.35"/>
<path d="M626.0 153.15L630.35 148.8M626.0 157.07L634.27 148.8M626.0 160.99L638.19 148.8M629.8 161.1L638.3 152.6M633.7 161.1L638.3 156.5" stroke="#3f57d6" stroke-width="1.2" stroke-linecap="butt"/>
<!-- dotted rect -->
<rect x="681.8" y="146.8" width="16.6" height="16.3" rx="2.6" fill="#e4e8fb" stroke="#4d64d8" stroke-width="1.5" stroke-dasharray="1.45 1.15" stroke-linecap="butt"/>
<rect x="684.6" y="149.7" width="10.8" height="10.5" rx="1" fill="#fff" stroke="#4b5352" stroke-width="1.3"/>
<!-- rows -->
<rect x="741" y="149.8" width="15.1" height="9.3" rx="1.6" fill="#f1f3fd" stroke="#5a70d8" stroke-width="1.2"/>
<g stroke="#4b5352" stroke-width="1.2" stroke-linecap="butt">
<path d="M740.8 146.8H747.3M748.2 146.8H749.4M750.2 146.8H756.7"/>
<path d="M740.8 161.9H747.3M748.2 161.9H749.4M750.2 161.9H756.7"/>
<path d="M743.2 152H747.2M748.2 152H749.4M750.4 152H754"/>
<path d="M743.2 156.9H747.2M748.2 156.9H749.4M750.4 156.9H754"/>
</g>
<!-- refresh -->
<g stroke="#3f57d6" stroke-width="1.3">
<path d="M809.6 154.6A8.5 8.5 0 0 1 824.6 149.2"/>
<path d="M826.6 154.8A8.5 8.5 0 0 1 811.6 160.2"/>
</g>
<path d="M826.3 147.8L826.5 152.2L822.1 151.4Z M809.9 161.6L809.7 157.2L814.1 158Z" fill="#3f57d6" stroke="#3f57d6" stroke-width="0.6"/>
<!-- lock layer -->
<path d="M866.9 155.8L874.4 148.1L885.5 151.3L881 157.6H873Z" fill="#d8defa" stroke="#3f57d6" stroke-width="1.2"/>
<path d="M876.6 158V156.4A2.1 2.3 0 0 1 880.8 156.4V158" stroke="#4b5352" stroke-width="1.3" fill="#fff"/>
<rect x="875.4" y="158.1" width="6.6" height="4.3" rx="0.8" fill="#fff" stroke="#4b5352" stroke-width="1.3"/>
<!-- play / rec -->
<path d="M925.6 148.1V160.5L933.6 154.3Z" fill="#c5ebc8" stroke="#1f9a2a" stroke-width="1.4"/>
<circle cx="938.5" cy="154.3" r="3.9" stroke="#c8342f" stroke-width="1.15" fill="#fff"/>
<circle cx="938.5" cy="154.3" r="1.7" fill="#c8342f" stroke="none"/>
</g>
</svg>
</body>
</html>
